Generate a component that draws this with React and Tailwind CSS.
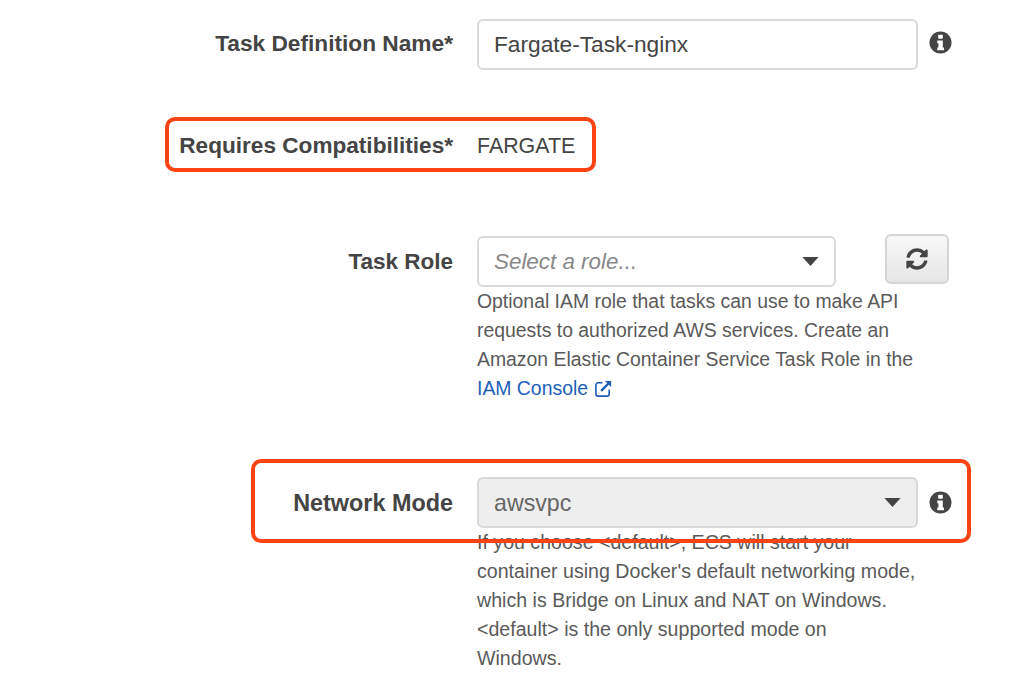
import React from "react";
import { FaSyncAlt } from "react-icons/fa";

function Info({ className = "" }) {
  return (
    <svg viewBox="0 0 24 24" className={`w-[23px] h-[23px] ${className}`}>
      <circle cx="12" cy="12" r="11.5" fill="#444" />
      <rect x="9.6" y="4" width="4.8" height="4" rx="0.6" fill="#fff" />
      <path d="M8.6 10h5.8v7.2h1.2V20H8.6v-2.8h1.2v-4.4H8.6z" fill="#fff" />
    </svg>
  );
}

function Caret() {
  return (
    <svg viewBox="0 0 18 10" className="w-[17px] h-[9px]">
      <path d="M0 0h18L9 10z" fill="#444" />
    </svg>
  );
}

function ExternalLink() {
  return (
    <svg viewBox="0 0 20 20" className="inline-block w-[19px] h-[19px] ml-[6px] -mt-[3px] align-middle" fill="none" stroke="#1c5fb8">
      <path d="M9 4H4.500A2.500 2.500 0 0 0 2 6.500v9A2.500 2.500 0 0 0 4.500 18h9a2.500 2.500 0 0 0 2.500-2.500V11" strokeWidth="1.700" />
      <path d="M7.500 12.500L16 4" strokeWidth="2.400" />
      <path d="M11.500 2H18v6.500z" fill="#1c5fb8" stroke="none" />
    </svg>
  );
}

function Label({ children, size = "text-[22.6px]" }) {
  return <div className={`w-[453px] shrink-0 text-right font-bold text-[#444] leading-[30px] ${size}`}>{children}</div>;
}

function Help({ children, size = "text-[19.4px]" }) {
  return <div className={`leading-[29px] text-[#5a5a5a] ${size}`}>{children}</div>;
}

export default function App() {
  return (
    <div className="relative w-[1024px] h-[693px] overflow-hidden bg-white font-['Liberation_Sans',Arial,sans-serif]">
      <div className="flex flex-col pt-[19px]">
        <div className="flex items-center h-[51px]">
          <div className="-mt-[4px]"><Label size="text-[22.7px]">Task Definition Name*</Label></div>
          <div className="ml-[24px] w-[441px] h-[51px] flex items-center px-[15px] border-2 border-[#dadada] rounded-[6px] text-[22.7px] text-[#444] bg-white">
            Fargate-Task-nginx
          </div>
          <Info className="ml-[11px] -mt-[5px]" />
        </div>

        <div className="flex items-center h-[30px] mt-[61px]">
          <Label>Requires Compatibilities*</Label>
          <div className="ml-[24px] text-[21.4px] text-[#444]">FARGATE</div>
        </div>

        <div className="flex mt-[75px]">
          <div className="pt-[11px]"><Label size="text-[22.5px]">Task Role</Label></div>
          <div className="ml-[24px] w-[441px] shrink-0">
            <div className="flex items-start justify-between">
              <div className="w-[359px] h-[51px] flex items-center justify-between pl-[15px] pr-[15px] border-2 border-[#dadada] rounded-[6px]">
                <span className="italic text-[22.4px] text-[#888] pt-[1px]">Select a role...</span>
                <Caret />
              </div>
              <div className="-mt-[2px] -mr-[31px] w-[64px] h-[50px] flex items-center justify-center border-2 border-[#d5d5d5] rounded-[6px] bg-[linear-gradient(#f8f8f8,#e6e6e6)]">
                <FaSyncAlt className="text-[#444] w-[22px] h-[22px]" />
              </div>
            </div>
            <Help>
              Optional IAM role that tasks can use to make API<br />
              requests to authorized AWS services. Create an<br />
              Amazon Elastic Container Service Task Role in the<br />
              <span className="text-[#1c5fb8]">IAM Console<ExternalLink /></span>
            </Help>
          </div>
        </div>

        <div className="flex mt-[74px]">
          <div className="pt-[11px]"><Label size="text-[23.4px]">Network Mode</Label></div>
          <div className="ml-[24px] w-[441px] shrink-0">
            <div className="w-[441px] h-[51px] flex items-center justify-between pl-[15px] pr-[15px] border-2 border-[#d8d8d8] rounded-[6px] bg-[#eeeeee]">
              <span className="text-[23.2px] text-[#666] pt-[1px]">awsvpc</span>
              <Caret />
            </div>
            <Help size="text-[19.6px]">
              If you choose &lt;default&gt;, ECS will start your<br />
              container using Docker's default networking mode,<br />
              which is Bridge on Linux and NAT on Windows.<br />
              &lt;default&gt; is the only supported mode on<br />
              Windows.
            </Help>
          </div>
          <Info className="ml-[11px] mt-[14px]" />
        </div>
      </div>

      <div className="absolute left-[165px] top-[117px] w-[431px] h-[55px] border-[4px] border-[#fb4415] rounded-[10px]" />
      <div className="absolute left-[251px] top-[459px] w-[720px] h-[84px] border-[4px] border-[#fb4415] rounded-[10px]" />
    </div>
  );
}
